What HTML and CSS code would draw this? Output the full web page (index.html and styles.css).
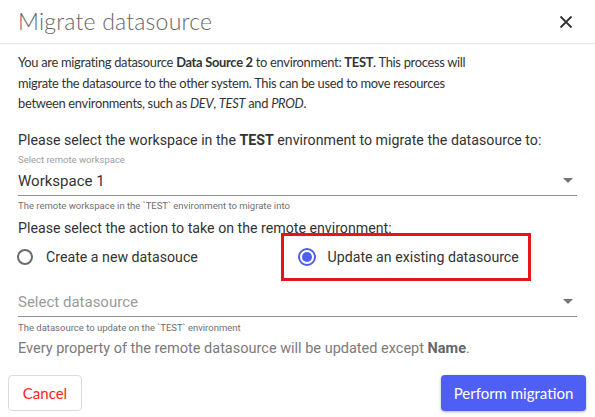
FILE: index.html
```html
<!DOCTYPE html>
<html lang="en">
<head>
<meta charset="utf-8">
<title>Migrate datasource</title>
<link rel="stylesheet" href="styles.css">
</head>
<body>
<div class="dialog">
  <div class="header">
    <h1 class="title">Migrate datasource</h1>
    <button class="close" aria-label="Close">
      <svg width="14" height="14" viewBox="0 0 14 14"><path d="M1.5 1.5L12.5 12.5M12.5 1.5L1.5 12.5" stroke="#333" stroke-width="1.8" fill="none"/></svg>
    </button>
  </div>
  <div class="content">
    <p class="intro">You are migrating datasource <b>Data Source 2</b> to environment: <b>TEST</b>. This process will migrate the datasource to the other system. This can be used to move resources between environments, such as <i>DEV</i>, <i>TEST</i> and <i>PROD</i>.</p>

    <p class="prompt">Please select the workspace in the <b>TEST</b> environment to migrate the datasource to:</p>
    <div class="field">
      <div class="label">Select remote workspace</div>
      <div class="select">
        <span class="value">Workspace 1</span>
        <span class="caret"></span>
      </div>
      <div class="helper">The remote workspace in the `TEST` environment to migrate into</div>
    </div>

    <p class="prompt prompt-action">Please select the action to take on the remote environment:</p>
    <div class="radios">
      <label class="radio">
        <span class="circle"></span>
        <span class="radio-text">Create a new datasouce</span>
      </label>
      <label class="radio checked">
        <span class="circle"><span class="halo"></span><span class="dot"></span></span>
        <span class="radio-text">Update an existing datasource</span>
      </label>
      <div class="highlight"></div>
    </div>

    <div class="field field-ds">
      <div class="select">
        <span class="placeholder">Select datasource</span>
        <span class="caret"></span>
      </div>
      <div class="helper">The datasource to update on the `TEST` environment</div>
    </div>
    <p class="note">Every property of the remote datasource will be updated except <b>Name</b>.</p>
  </div>
  <div class="footer">
    <button class="btn btn-cancel">Cancel</button>
    <button class="btn btn-primary">Perform migration</button>
  </div>
</div>
</body>
</html>
```

FILE: styles.css
```css
* { box-sizing: border-box; }
html, body { margin: 0; padding: 0; background: #fff; }
body { font-family: Lato, "Open Sans", sans-serif; color: #333; }

.dialog { width: 595px; height: 417px; }

.header {
  display: flex;
  align-items: center;
  justify-content: space-between;
  height: 44px;
  padding: 0 22px 0 18px;
  border-bottom: 1px solid #e2e2e2;
}
.title {
  margin: 0 0 1px 0;
  font-family: Lato, "Open Sans", sans-serif;
  font-weight: 300;
  font-size: 23px;
  color: #666;
  letter-spacing: 0.2px;
}
.close {
  border: 0; background: none; padding: 0; margin: 0;
  width: 14px; height: 14px; display: block;
}
.close svg { display: block; }

.content { padding: 8px 18px 0 18px; }

.intro {
  margin: 0;
  max-width: 462px;
  font-size: 12.9px;
  letter-spacing: -0.3px;
  line-height: 20.5px;
  color: #333;
}
.intro b { font-weight: 700; }

.prompt {
  margin: 16px 0 0 0;
  font-family: Roboto, sans-serif;
  font-size: 14.2px;
  line-height: 20px;
  color: #333;
}
.prompt b { font-weight: 700; }

.field { margin-top: 4px; }
.label {
  font-family: Roboto, sans-serif;
  font-size: 9.5px;
  line-height: 12px;
  color: #9e9e9e;
}
.select {
  display: flex;
  align-items: center;
  justify-content: space-between;
  margin-top: 5px;
  padding: 0 4px 4px 0;
  border-bottom: 1px solid #8f8f8f;
  font-family: Roboto, sans-serif;
  font-size: 15px;
  line-height: 20px;
}
.value { color: #333; }
.placeholder { color: #9a9a9a; }
.caret {
  width: 0; height: 0;
  border-left: 5px solid transparent;
  border-right: 5px solid transparent;
  border-top: 5px solid #757575;
}
.helper {
  margin-top: 4px;
  font-family: Roboto, sans-serif;
  font-size: 9.5px;
  line-height: 12px;
  color: #6f6f6f;
}

.prompt-action { margin-top: 6px; }

.radios {
  position: relative;
  display: grid;
  grid-template-columns: 1fr 1fr;
  height: 38px;
}
.radio {
  display: flex;
  align-items: center;
  gap: 13px;
  font-family: Roboto, sans-serif;
  font-size: 14.2px;
  color: #333;
}
.circle {
  position: relative;
  width: 16px; height: 16px;
  border: 2px solid #6b6b6b;
  border-radius: 50%;
  flex: none;
  margin-left: -1px;
}
.radio.checked .circle {
  width: 18px; height: 18px;
  border-color: #4d5ff2;
  margin-left: 0;
  margin-right: -1px;
}
.halo {
  position: absolute;
  left: 50%; top: 50%;
  width: 38px; height: 38px;
  margin: -19px 0 0 -19px;
  border-radius: 50%;
  background: #e9ebfd;
  z-index: -1;
}
.dot {
  position: absolute;
  left: 50%; top: 50%;
  width: 10px; height: 10px;
  margin: -5px 0 0 -5px;
  border-radius: 50%;
  background: #4d5ff2;
}
.highlight {
  position: absolute;
  left: 263px; top: -5px;
  width: 250px; height: 48px;
  border: 3px solid #e3161a;
  pointer-events: none;
}

.field-ds { margin-top: 16px; }
.field-ds .select { margin-top: 0; padding-bottom: 4px; }
.field-ds .helper { margin-top: 5px; }

.note {
  margin: 5px 0 0 0;
  font-family: Roboto, sans-serif;
  font-size: 14.5px;
  line-height: 20px;
  color: #7a7a7a;
}
.note b { color: #666; font-weight: 700; }

.footer {
  display: flex;
  justify-content: space-between;
  padding: 16px 9px 0 8px;
}
.btn {
  height: 36px;
  border-radius: 4px;
  font-family: Lato, "Open Sans", sans-serif;
  font-size: 15px;
  cursor: pointer;
}
.btn-cancel {
  width: 74px;
  background: #fff;
  border: 1px solid #dcdcdc;
  color: #f22;
}
.btn-primary {
  width: 145px;
  background: #4f5ff6;
  border: 0;
  color: #fff;
  box-shadow: 0 1px 3px rgba(0,0,0,0.3);
}
```
